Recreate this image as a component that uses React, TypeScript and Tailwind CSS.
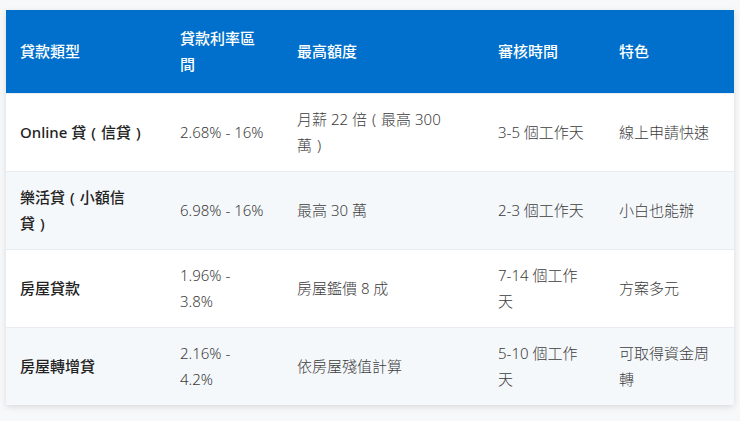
import React from 'react'

const HEADERS = ['貸款類型', '貸款利率區間', '最高額度', '審核時間', '特色']

const ROWS = [
  ['Online 貸(信貸)', '2.68% - 16%', '月薪 22 倍(最高 300 萬)', '3-5 個工作天', '線上申請快速'],
  ['樂活貸(小額信貸)', '6.98% - 16%', '最高 30 萬', '2-3 個工作天', '小白也能辦'],
  ['房屋貸款', '1.96% - 3.8%', '房屋鑑價 8 成', '7-14 個工作天', '方案多元'],
  ['房屋轉增貸', '2.16% - 4.2%', '依房屋殘值計算', '5-10 個工作天', '可取得資金周轉'],
]

const WIDTHS = ['w-[160px]', 'w-[117px]', 'w-[201px]', 'w-[121px]', 'w-[129px]']
const PAD_R = ['pr-[14px]', 'pr-[17px]', 'pr-[14px]', 'pr-[14px]', 'pr-[14px]']

// brackets in the original are full-width with the glyph centred
const withBrackets = (text: string) =>
  text.split(/([()])/).map((part, i) =>
    part === '(' || part === ')' ? (
      <span key={i} className="mx-[5px]">
        {part}
      </span>
    ) : (
      part
    )
  )

export default function App() {
  return (
    <div
      className="min-h-[421px] w-[740px] bg-[#f7f8f9] px-[6px] pt-[10px]"
      style={{ fontFamily: '"Noto Sans", "Noto Sans CJK TC", sans-serif' }}
    >
      <div className="shadow-[0_2px_6px_rgba(0,0,0,0.12)]">
        <table className="w-[728px] table-fixed border-collapse text-[15px] leading-[26px]">
          <thead>
            <tr className="bg-[#0070cc]">
              {HEADERS.map((h, i) => (
                <th
                  key={h}
                  className={`${WIDTHS[i]} h-[83px] pl-[14px] ${PAD_R[i]} text-left align-middle font-medium text-white`}
                >
                  {h}
                </th>
              ))}
            </tr>
          </thead>
          <tbody>
            {ROWS.map((row, r) => (
              <tr
                key={r}
                className={`${r % 2 === 0 ? 'bg-white' : 'bg-[#f5f8fb]'} border-t border-[#e8ecf0]`}
              >
                {row.map((cell, c) => (
                  <td
                    key={c}
                    className={`h-[78px] pl-[14px] ${PAD_R[c]} align-middle ${
                      c === 0 ? 'font-medium text-[#222]' : 'font-light text-[#3c3c3c]'
                    }`}
                  >
                    {withBrackets(cell)}
                  </td>
                ))}
              </tr>
            ))}
          </tbody>
        </table>
      </div>
    </div>
  )
}
